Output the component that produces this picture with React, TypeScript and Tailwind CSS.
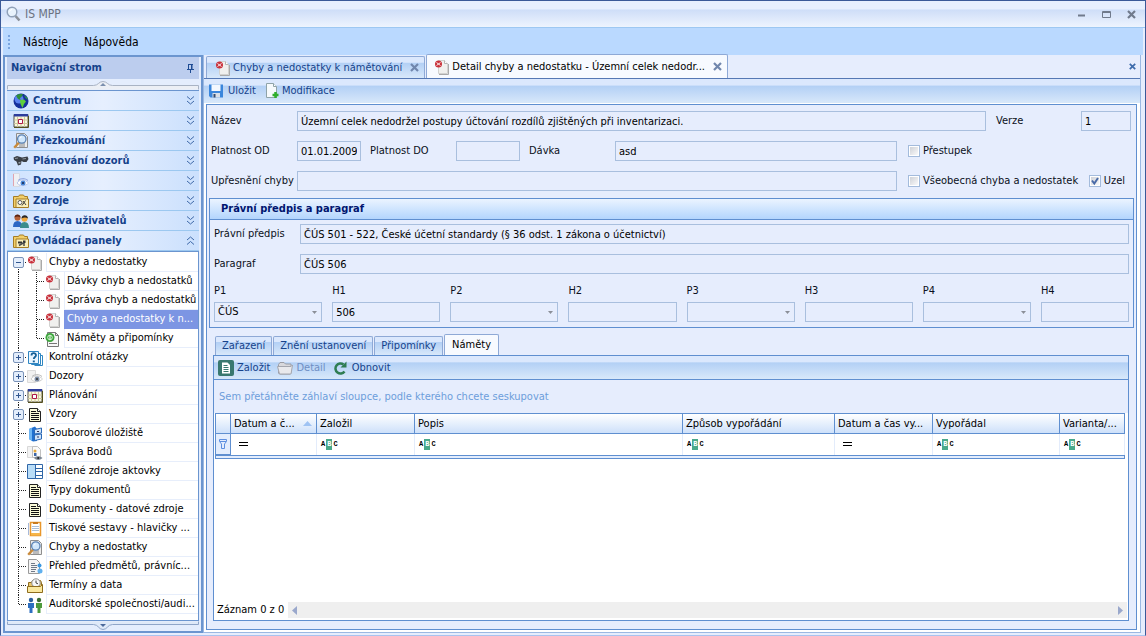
import { useId } from 'react';
import type { ReactNode } from 'react';
import clsx from 'clsx';

type IconName =
  | 'error'
  | 'globe'
  | 'calendar'
  | 'search'
  | 'binoculars'
  | 'eye'
  | 'folder'
  | 'folderTools'
  | 'users'
  | 'note'
  | 'question'
  | 'eyeGray'
  | 'doc'
  | 'storage'
  | 'points'
  | 'grid'
  | 'print'
  | 'overview'
  | 'clock'
  | 'people';

const icons: Record<IconName, ReactNode> = {
  error: (
    <>
      <path d="M4.500 1.500h6l3 3v10h-9z" fill="#f0f0ee" stroke="#d2d2d0" />
      <path d="M5 15.500h9.500V5" stroke="#aaa" />
      <path d="M10.500 1.500v3h3" fill="#fff" stroke="#b5b5b5" />
      <circle cx="4.500" cy="5" r="3.500" fill="#c9323c" />
      <path d="M2.500 3.500 6.500 6.500M6.500 3.500 2.500 6.500" stroke="#fff" strokeWidth=".900" />
    </>
  ),
  globe: (
    <>
      <circle cx="8" cy="8" r="7.500" fill="#16309c" />
      <circle cx="6" cy="6" r="4.500" fill="#5b82f0" />
      <path d="M3 2.500 6 1 10 1 8.500 4 7 5 7.500 7 5 6z" fill="#2f8e3a" />
      <path d="M7 7 11 6.500 13 8.500 11 11 9.500 15 7.500 11z" fill="#5fd03a" />
      <path d="M11 2 14 4.500 15 7 12.500 5z" fill="#2f9e3a" />
    </>
  ),
  calendar: (
    <>
      <path d="M1 1.500h14v12.500H1z" fill="#fbf8da" stroke="#4a4a4a" />
      <path d="M1 1h14v2.500H1z" fill="#2c3c9c" />
      <path d="M4.500 4v10M8 4v10M11.500 4v10M1 7h14M1 10.500h14" stroke="#cdc79c" />
      <path d="M5.500 6.500h4v4h-4z" fill="#fff" stroke="#b01848" />
      <path d="M1 14.500h14.500V3" stroke="#55501e" fill="none" />
    </>
  ),
  search: (
    <>
      <path d="M3.500.500h8l3 3v11h-11z" fill="#ededed" stroke="#8e8e8e" />
      <path d="M6 11h6M6 13h6" stroke="#8a8a8a" />
      <path d="M1.200 14.800 6 9.500" stroke="#c98a3a" strokeWidth="2.400" />
      <circle cx="8.800" cy="6" r="4.200" fill="#cfe6fb" stroke="#5b83b4" strokeWidth="1.300" />
      <path d="M6.800 5.500a2.200 2.200 0 0 1 2-1.700" stroke="#fff" fill="none" />
    </>
  ),
  binoculars: (
    <>
      <path d="M.500 4.500 4 3l5 1.500 5.500-1 1 2.500-2 3h-3L8.500 8 8 11.500 5 12.500 3.500 8.500 1 7z" fill="#3a3f46" />
      <path d="M2 5.500 5 5M9.500 6 13 5.500" stroke="#8f979f" />
      <path d="M5.500 10 7.500 9.500" stroke="#9aa3ad" strokeWidth="1.500" />
    </>
  ),
  eye: (
    <>
      <path d="M.500.500h6v13h-6z" fill="#eef0f4" stroke="#d5dae4" />
      <path d="M.500 1v12" stroke="#e0a4b0" />
      <path d="M4 10c2.500-4 8-4 11.500 0-3 3.500-8.500 3.500-11.500 0z" fill="#fff" stroke="#b8c6ec" />
      <circle cx="10" cy="10" r="2.500" fill="#4a88d8" />
      <circle cx="10" cy="10" r="1" fill="#16264c" />
      <path d="M5 7.500c2.500-2.500 7-2.500 10 0" stroke="#8ea2dc" fill="none" />
    </>
  ),
  folder: (
    <>
      <path d="M.500 3.500h5l1-1.500h4l1 1.500h3v11H.500z" fill="#f2cf6a" stroke="#a57c26" />
      <path d="M3 6h12.500v8.500H3z" fill="#faeeb8" stroke="#a57c26" />
      <circle cx="7" cy="9.500" r="2" fill="#fff" stroke="#555" />
      <path d="M9 12.500 12.500 7.500M10 8l3 4" stroke="#3f3f3f" />
    </>
  ),
  folderTools: (
    <>
      <path d="M.500 3.500h5l1-1.500h4l1 1.500h3v11H.500z" fill="#f2cf6a" stroke="#a57c26" />
      <path d="M3 6h12.500v8.500H3z" fill="#faeeb8" stroke="#a57c26" />
      <path d="M5 8.500h4v2H5zM10 7.500h2.500v2.500H10z" fill="#333" />
      <path d="M6 12.500 11 9.500M11 13v-3" stroke="#4c4c4c" strokeWidth="1.500" />
    </>
  ),
  users: (
    <>
      <path d="M0 14c0-4 1.500-6 4.500-6S9 10 9 14z" fill="#2c66c4" />
      <circle cx="4.500" cy="4.800" r="3" fill="#b5623a" />
      <path d="M1.500 4.500C1.500.500 7.500.500 7.500 4.500 6 3.500 3.500 3 1.500 4.500z" fill="#5a2414" />
      <path d="M7 15c0-4 1.500-6 4.500-6s4.500 2 4.500 6z" fill="#3a8c8c" />
      <circle cx="11.500" cy="5.800" r="3" fill="#f0a83c" />
      <path d="M8.500 5.500c0-4.500 6.500-4.500 6.500 0-2-1.500-4-1.500-6.500 0z" fill="#26262a" />
    </>
  ),
  note: (
    <>
      <path d="M2.500 1.500h8l3 3v11h-11z" fill="#f7f7f7" stroke="#777" />
      <path d="M10.500 1.500v3h3M4 12.500h8" fill="none" stroke="#777" />
      <circle cx="5" cy="6.500" r="4.500" fill="#3ba53c" />
      <circle cx="5" cy="6.500" r="2.300" fill="none" stroke="#d8f3d0" />
      <path d="M5 4.500v4" stroke="#fff" />
    </>
  ),
  question: (
    <>
      <path d="M1.500 1.500h10v12h-10z" fill="#eaf6ff" stroke="#2f86c2" />
      <path d="M11.500 3.500h2v11h-9v-1M13.500 5.500h2v10h-8" fill="none" stroke="#2f86c2" />
      <path d="M4.500 5.500c0-3 4.500-3 4.500-.300C9 7 6.800 7 6.800 9" fill="none" stroke="#176096" strokeWidth="1.800" />
      <path d="M5.800 10.500h2v1.800h-2z" fill="#176096" />
    </>
  ),
  eyeGray: (
    <>
      <path d="M.500 1.500h8v12h-8z" fill="#f1f1f1" stroke="#dadada" />
      <path d="M4 10c2.500-4 8-4 11.500 0-3 3.500-8.500 3.500-11.500 0z" fill="#fff" stroke="#cdcdcd" />
      <circle cx="10" cy="10" r="2.500" fill="#7f8fa8" />
      <circle cx="10" cy="10" r="1" fill="#333" />
      <path d="M5 7.500c2.500-2.500 7-2.500 10 0" stroke="#b8b8b8" fill="none" />
    </>
  ),
  doc: (
    <>
      <path d="M2.500 1.500h8l3 3v10h-11z" fill="#fbfbd8" stroke="#222" />
      <path d="M10.500 1.500v3h3" fill="#fff" stroke="#222" />
      <path d="M4 4.500h5M4 6.500h8M4 8.500h8M4 10.500h8M4 12.500h8" stroke="#111" />
    </>
  ),
  storage: (
    <>
      <path d="M2 3 8 .500 10 3v12l-4 .500L2 13z" fill="#1f6fd0" />
      <path d="M2 3 5 1.800V15L2 13z" fill="#6db5f4" />
      <path d="M7.500 3.500 14.500 2v5l-7 1z" fill="#cfe3fa" stroke="#2a69b8" />
      <path d="M7.500 9 14.500 8v5l-7 1.500z" fill="#cfe3fa" stroke="#2a69b8" />
      <path d="M10 5.500h2M10 11h2" stroke="#335" />
    </>
  ),
  points: (
    <>
      <path d="M.500 1.500h7v11h-7z" fill="#f3f3f3" stroke="#d8d8d8" />
      <path d="M5.500 1.500h5l3 3v8h-8z" fill="#fafafa" stroke="#c0c0c0" />
      <circle cx="8" cy="6" r="1.500" fill="#e5a93c" />
      <path d="M7 8h2.500v3H7z" fill="#3b66a8" />
      <path d="M7 13c2-2.500 6-2.500 8.500 0-2.500 2.500-6.500 2.500-8.500 0z" fill="#7b8694" />
      <circle cx="11.200" cy="13" r="1" fill="#222" />
    </>
  ),
  grid: (
    <>
      <path d="M.500.500h15v14H.500z" fill="#fff" stroke="#2f66a8" />
      <path d="M1 1h7v13H1z" fill="#b9ddf8" />
      <path d="M8.500.500v14M9 4.500h7M9 7.500h7M9 11.500h7" stroke="#2f66a8" />
    </>
  ),
  print: (
    <>
      <path d="M3.500 1.500h10v13h-10z" fill="#fff" stroke="#e8962c" strokeWidth="1.500" />
      <path d="M6 1h5v2H6z" fill="#c97a1c" />
      <path d="M5 5.500h7M5 7.500h7M5 9.500h7" stroke="#a9bfd8" />
      <path d="M4 12h9v2.500H4z" fill="#f6b64a" />
      <path d="M1.500 2v12" stroke="#a5b9dc" />
    </>
  ),
  overview: (
    <>
      <path d="M1.500.500h8l3 3v11h-11z" fill="#f5f5f5" stroke="#9a9a9a" />
      <path d="M4 4.500h4M4 6.500h6M4 8.500h6M4 10.500h5M4 12.500h4" stroke="#707a88" />
      <circle cx="12.500" cy="6.500" r="2" fill="#3c97e0" />
      <circle cx="13" cy="12" r="2.500" fill="#5fb0ef" />
    </>
  ),
  clock: (
    <>
      <path d="M1.500 4.500h3l1-2h8l1 2v10h-13z" fill="#e9c46a" stroke="#8f6d1e" />
      <circle cx="9" cy="5" r="4.200" fill="#f7f7f7" stroke="#8d8d8d" />
      <path d="M9 2.500V5l2 .800" stroke="#444" fill="none" />
      <path d="M.500 8.500h13l2-2v8H.500z" fill="#fae8a0" stroke="#8f6d1e" />
    </>
  ),
  people: (
    <>
      <circle cx="4" cy="3" r="2.200" fill="#2d5f9e" />
      <path d="M1 6h6v5H5.500v5h-3v-5H1z" fill="#2d6fc0" />
      <circle cx="12" cy="3" r="2.200" fill="#3b6b35" />
      <path d="M9 6h6v5h-1.500v5h-3v-5H9z" fill="#4c9a3d" />
    </>
  ),
};

const Icon = ({ name }: { name: IconName }) => (
  <svg viewBox="0 0 16 16" className="size-4 shrink-0" fill="none" aria-hidden="true">
    {icons[name]}
  </svg>
);

const Cross = ({ className }: { className: string }) => (
  <svg viewBox="0 0 9 9" className={className} aria-hidden="true">
    <path d="M1 1 8 8M8 1 1 8" stroke="currentColor" strokeWidth="2.200" />
  </svg>
);

const groups: { label: string; icon: IconName; open?: boolean }[] = [
  { label: 'Centrum', icon: 'globe' },
  { label: 'Plánování', icon: 'calendar' },
  { label: 'Přezkoumání', icon: 'search' },
  { label: 'Plánování dozorů', icon: 'binoculars' },
  { label: 'Dozory', icon: 'eye' },
  { label: 'Zdroje', icon: 'folder' },
  { label: 'Správa uživatelů', icon: 'users' },
  { label: 'Ovládací panely', icon: 'folderTools', open: true },
];

type Node = {
  label: string;
  icon: IconName;
  child?: boolean;
  toggle?: 'plus' | 'minus';
  selected?: boolean;
  last?: boolean;
};

const nodes: Node[] = [
  { label: 'Chyby a nedostatky', icon: 'error', toggle: 'minus' },
  { label: 'Dávky chyb a nedostatků', icon: 'error', child: true },
  { label: 'Správa chyb a nedostatků', icon: 'error', child: true },
  { label: 'Chyby a nedostatky k n...', icon: 'error', child: true, selected: true },
  { label: 'Náměty a připomínky', icon: 'note', child: true, last: true },
  { label: 'Kontrolní otázky', icon: 'question', toggle: 'plus' },
  { label: 'Dozory', icon: 'eyeGray', toggle: 'plus' },
  { label: 'Plánování', icon: 'calendar', toggle: 'plus' },
  { label: 'Vzory', icon: 'doc', toggle: 'plus' },
  { label: 'Souborové úložiště', icon: 'storage' },
  { label: 'Správa Bodů', icon: 'points' },
  { label: 'Sdílené zdroje aktovky', icon: 'grid' },
  { label: 'Typy dokumentů', icon: 'doc' },
  { label: 'Dokumenty - datové zdroje', icon: 'doc' },
  { label: 'Tiskové sestavy - hlavičky ...', icon: 'print' },
  { label: 'Chyby a nedostatky', icon: 'search' },
  { label: 'Přehled předmětů, právníc...', icon: 'overview' },
  { label: 'Termíny a data', icon: 'clock' },
  { label: 'Auditorské společnosti/audi...', icon: 'people', last: true },
];

// connector lines and the expand box, one piece for each row
const Branch = ({ node, first }: { node: Node; first: boolean }) => (
  <svg
    viewBox={node.child ? '0 0 37 19' : '0 0 19 19'}
    className={clsx('h-[19px] shrink-0', node.child ? 'w-[37px]' : 'w-[19px]')}
    fill="none"
    stroke="#222"
    strokeDasharray="1 1"
    aria-hidden="true"
  >
    <path d={node.child ? 'M10.500 0v19' : first ? 'M10.500 10v9' : node.last ? 'M10.500 0v10' : 'M10.500 0v19'} />
    {node.child ? <path d={node.last ? 'M28.500 0v10M29 9.500h8' : 'M28.500 0v19M29 9.500h8'} /> : <path d="M11 9.500h8" />}
    {node.toggle && (
      <g strokeDasharray="none">
        <rect x="5.500" y="4.500" width="10" height="10" rx="1.500" fill="#e3edfb" stroke="#7992b8" />
        <path d={node.toggle === 'plus' ? 'M8 9.500h5M10.500 7v5' : 'M8 9.500h5'} stroke="#31568f" />
      </g>
    )}
  </svg>
);

const Sidebar = () => (
  <aside className="flex w-[200px] shrink-0 flex-col border-2 border-[#6b95cf] bg-[#e4edfd] px-0.5">
    <div className="flex h-[22px] items-center justify-between bg-[#bccdee] px-1 font-bold text-[#15428b]">
      <h2>Navigační strom</h2>
      <button type="button" aria-label="Připnout">
        <svg viewBox="0 0 9 9" className="size-[9px]" fill="none" stroke="#1f4c94" aria-hidden="true">
          <path d="M2.500 0v5M2 .500h5M6 0v5M5.500 0v5M1 5.500h7M4.500 6v3" />
        </svg>
      </button>
    </div>
    <button type="button" aria-label="Posunout nahoru" className="flex h-3 items-end border-b border-[#6b95cf]">
      <svg viewBox="0 0 192 10" preserveAspectRatio="none" className="h-[10px] w-full" aria-hidden="true">
        <path d="M.500 9.500v-4h86c5 0 5-4 9.500-4s4.500 4 9.500 4h86v4" fill="#eceff5" stroke="#a9b3c4" />
        <path d="M93 6h6l-3-3z" fill="#7b8fae" />
      </svg>
    </button>
    {groups.map((group) => (
      <button
        key={group.label}
        type="button"
        className="flex h-5 shrink-0 items-center gap-1 border-b border-[#9cc8f0] bg-linear-to-r from-[#cfe3ff] via-[#e6effe] to-[#cbe0fd] pr-1 pl-1.5 text-left font-bold text-[#15428b]"
      >
        <Icon name={group.icon} />
        <span className="flex-1">{group.label}</span>
        <svg
          viewBox="0 0 9 9"
          className={clsx('size-[9px]', group.open && 'rotate-180')}
          fill="none"
          stroke="#3e68a8"
          aria-hidden="true"
        >
          <path d="M1 .500 4.500 3.500 8 .500M1 5 4.500 8 8 5" />
        </svg>
      </button>
    ))}
    <ul className="min-h-0 flex-1 border border-[#6b95cf] bg-white pt-px">
      {nodes.map((node, i) => (
        <li key={node.label + i} className="flex h-[19px]">
          <Branch node={node} first={i === 0} />
          <span className="flex items-center">
            <Icon name={node.icon} />
          </span>
          <a
            href="#"
            className={clsx(
              'ml-[3px] min-w-0 flex-1 overflow-hidden border-b border-l pl-0.5 leading-[18px] whitespace-nowrap',
              node.selected ? 'border-[#7c95e3] bg-[#7c95e3] text-white' : 'border-[#e7eefb] text-black',
            )}
          >
            {node.label}
          </a>
        </li>
      ))}
    </ul>
    <button type="button" aria-label="Posunout dolů" className="flex h-[10px]">
      <svg viewBox="0 0 192 10" preserveAspectRatio="none" className="h-[10px] w-full" aria-hidden="true">
        <path d="M.500.500v3h86c5 0 5 5 9.500 5s4.500-5 9.500-5h86v-3" fill="#dfe9f8" stroke="#8fa5c8" />
        <path d="M93 3h6l-3 3z" fill="#4c6a9c" />
      </svg>
    </button>
  </aside>
);

type FieldProps = { label: string; value?: string; labelClass: string; className?: string };

const inputClass = 'h-5 border border-[#a9bfde] bg-[#e6edfd] px-[3px] text-black outline-none';

const Field = ({ label, value = '', labelClass, className }: FieldProps) => {
  const id = useId();
  return (
    <>
      <label htmlFor={id} className={clsx('shrink-0', labelClass)}>
        {label}
      </label>
      <input id={id} type="text" readOnly value={value} className={clsx(inputClass, className)} />
    </>
  );
};

const Check = ({ label, checked = false }: { label: string; checked?: boolean }) => (
  <label className="flex items-center gap-[3px] whitespace-nowrap">
    <span className="relative flex">
      <input
        type="checkbox"
        defaultChecked={checked}
        className="peer size-3 appearance-none border border-[#a3bbdc] bg-linear-to-br from-[#c9ccd3] to-white outline-1 -outline-offset-2 outline-white"
      />
      <svg
        viewBox="0 0 12 12"
        className="pointer-events-none absolute inset-0 hidden size-3 peer-checked:block"
        fill="none"
        aria-hidden="true"
      >
        <path d="M3 5.500 5.300 8.500 9 3" stroke="#4a6ba8" strokeWidth="2" />
      </svg>
    </span>
    {label}
  </label>
);

const refs = [
  { label: 'P1', value: 'ČÚS', list: true },
  { label: 'H1', value: '506' },
  { label: 'P2', list: true },
  { label: 'H2' },
  { label: 'P3', list: true },
  { label: 'H3' },
  { label: 'P4', list: true },
  { label: 'H4' },
];

const Reference = ({ label, value = '', list }: { label: string; value?: string; list?: boolean }) => {
  const id = useId();
  return (
    <div className="flex min-w-0 flex-col gap-1">
      <label htmlFor={id} className="leading-[14px]">
        {label}
      </label>
      {list ? (
        <span className="relative flex">
          <select id={id} defaultValue={value} className={clsx(inputClass, 'w-full appearance-none')}>
            <option>{value}</option>
          </select>
          <svg viewBox="0 0 5 3" className="pointer-events-none absolute top-[9px] right-[5px] h-[3px] w-[5px]" aria-hidden="true">
            <path d="M0 0h5L2.500 3z" fill="#8b8f98" />
          </svg>
        </span>
      ) : (
        <input id={id} type="text" readOnly value={value} className={clsx(inputClass, 'w-full')} />
      )}
    </div>
  );
};

const columns = [
  { label: 'Datum a č...', width: 'w-[86px]', date: true, sorted: true },
  { label: 'Založil', width: 'w-[98px]' },
  { label: 'Popis', width: 'w-auto' },
  { label: 'Způsob vypořádání', width: 'w-[152px]' },
  { label: 'Datum a čas vy...', width: 'w-[98px]', date: true },
  { label: 'Vypořádal', width: 'w-[127px]' },
  { label: 'Varianta/...', width: 'w-[65px]' },
];

const Equals = () => (
  <svg viewBox="0 0 9 5" className="ml-1 h-[5px] w-[9px]" aria-hidden="true">
    <path d="M0 .500h9M0 3.500h9" stroke="#000" />
  </svg>
);

const Abc = () => (
  <span className="flex h-[11px] items-center gap-px font-mono text-[7px] leading-[11px] font-bold text-black">
    A<span className="bg-[#4aa98a] px-px text-white">B</span>C
  </span>
);

const Grid = () => (
  <table className="w-full table-fixed border-collapse text-black">
    <thead>
      <tr className="h-5 bg-linear-to-b from-white to-[#cbdffa]">
        <th className="w-[15px] border border-[#5f8fd0]" />
        {columns.map((col) => (
          <th
            key={col.label}
            className={clsx('border border-[#5f8fd0] pr-1 pl-[3px] text-left font-normal whitespace-nowrap', col.width)}
          >
            <span className="flex items-center justify-between leading-4">
              {col.label}
              {col.sorted && (
                <svg viewBox="0 0 9 5" className="h-[5px] w-[9px] shrink-0" aria-hidden="true">
                  <path d="M0 5h9L4.500 0z" fill="#9fc3f3" />
                </svg>
              )}
            </span>
          </th>
        ))}
      </tr>
    </thead>
    <tbody>
      <tr className="h-[21px]">
        <td className="border border-[#5f8fd0] bg-[#e3edfd]">
          <svg viewBox="0 0 8 10" className="mx-auto h-[10px] w-2" fill="none" stroke="#5d8fe0" aria-hidden="true">
            <path d="M.500.500h7v2l-2 2.500v4.500h-3V5l-2-2.500zM1 2.500h6" />
          </svg>
        </td>
        {columns.map((col) => (
          <td key={col.label} className="border-r border-[#e3ecfb] pl-1">
            {col.date ? <Equals /> : <Abc />}
          </td>
        ))}
      </tr>
    </tbody>
  </table>
);

const bar = 'bg-linear-to-b from-[#dbe8fd] from-25% via-[#b3d0f5] via-30% to-[#d8e8fa]';

const DetailTabs = () => (
  <div role="tablist" className="flex items-end gap-px pl-0.5">
    {['Zařazení', 'Znění ustanovení', 'Připomínky'].map((label) => (
      <button
        key={label}
        type="button"
        role="tab"
        className={clsx('h-[19px] rounded-t-xs border border-b-0 border-[#8ea9d6] px-1.5 text-[#15428b]', bar)}
      >
        {label}
      </button>
    ))}
    <button
      type="button"
      role="tab"
      aria-selected="true"
      className="h-[21px] rounded-t-xs border border-b-0 border-[#8ea9d6] bg-[#f7faff] px-[7px] text-black"
    >
      Náměty
    </button>
  </div>
);

const Detail = () => (
  <section className="flex min-h-0 flex-1 flex-col">
    <DetailTabs />
    <div className="flex min-h-0 flex-1 flex-col border border-[#5f8fd0] bg-white">
      <div className={clsx('flex h-6 shrink-0 items-center border-b border-[#5f8fd0] px-1 text-[#15428b]', bar)}>
        <button type="button" className="flex items-center gap-[3px]">
          <svg viewBox="0 0 16 16" className="size-4" aria-hidden="true">
            <rect width="16" height="16" rx="2" fill="#39786f" />
            <path d="M4 2.500h5.500L12 5v8.500H4z" fill="#fff" />
            <path d="M5.500 5.500h4M5.500 7.500h5M5.500 9.500h5M5.500 11.500h5" stroke="#39786f" />
          </svg>
          Založit
        </button>
        <button type="button" disabled className="ml-[7px] flex items-center gap-[3px] text-[#6f8fc4]">
          <svg viewBox="0 0 16 16" className="size-4" aria-hidden="true">
            <path d="M1.500 4.500 3 2.500h4l1.500 1.500H14v9l-1 1H2.500l-1-1z" fill="#d8d8dc" stroke="#9a9ca4" />
            <path d="M.500 6.500h13.500l1.500-1.500-1.500 9H2.500z" fill="#e9e9ec" stroke="#a4a6ae" />
          </svg>
          Detail
        </button>
        <button type="button" className="ml-[7px] flex items-center gap-[5px]">
          <svg viewBox="0 0 14 14" className="size-[14px]" fill="none" aria-hidden="true">
            <path d="M11.500 10.500A5 5 0 1 1 10.500 3.500" stroke="#2f7d52" strokeWidth="2.500" />
            <path d="M7.500 6.500h6v-6z" fill="#2f7d52" />
          </svg>
          Obnovit
        </button>
      </div>
      <div className="flex min-h-0 flex-1 flex-col px-px">
        <p className="-mx-px flex h-[33px] shrink-0 items-center bg-[#e6edfd] px-[5px] text-[#6d9ddb]">
          Sem přetáhněte záhlaví sloupce, podle kterého chcete seskupovat
        </p>
        <div className="pr-0.5">
          <Grid />
          <div className="h-1 border border-[#5f8fd0] bg-[#e3edfd]" />
        </div>
        <div className="flex-1" />
        <div className="flex h-[18px] shrink-0 items-center gap-1 pb-0.5 pl-0.5">
          <span className="whitespace-nowrap text-black">Záznam 0 z 0</span>
          <div className="flex h-4 flex-1 items-center justify-between bg-[#efefef] px-1">
            <svg viewBox="0 0 5 9" className="h-[9px] w-[5px]" aria-hidden="true">
              <path d="M5 0v9L0 4.500z" fill="#9aa8cc" />
            </svg>
            <svg viewBox="0 0 5 9" className="h-[9px] w-[5px]" aria-hidden="true">
              <path d="M0 0v9l5-4.500z" fill="#9aa8cc" />
            </svg>
          </div>
        </div>
      </div>
    </div>
  </section>
);

const Form = () => (
  <form className="mr-[3px] mb-0.5 ml-0.5 flex min-h-0 flex-1 flex-col border border-[#5f8fd0] bg-[#e6edfd] p-0.5 pb-2">
    <div className="flex flex-col gap-2.5 pt-1 pr-[3px] pl-0.5">
      <div className="flex items-center">
        <Field label="Název" labelClass="w-[86px]" className="min-w-0 flex-1" value="Územní celek nedodržel postupy účtování rozdílů zjištěných při inventarizaci." />
        <Field label="Verze" labelClass="ml-2.5 w-[85px]" className="w-[50px]" value="1" />
      </div>
      <div className="flex items-center">
        <Field label="Platnost OD" labelClass="w-[86px]" className="w-16" value="01.01.2009" />
        <Field label="Platnost DO" labelClass="ml-[9px] w-[86px]" className="w-16" />
        <Field label="Dávka" labelClass="ml-[9px] w-[86px]" className="min-w-0 flex-1" value="asd" />
        <div className="ml-[11px] w-[223px] shrink-0">
          <Check label="Přestupek" />
        </div>
      </div>
      <div className="flex items-center">
        <Field label="Upřesnění chyby" labelClass="w-[86px]" className="min-w-0 flex-1" />
        <div className="ml-[11px] flex w-[223px] shrink-0 justify-between pr-1.5">
          <Check label="Všeobecná chyba a nedostatek" />
          <Check label="Uzel" checked />
        </div>
      </div>
    </div>
    <fieldset className="mt-[7px] border border-[#5f8fd0]">
      <h3 className="flex h-[21px] items-center border-b border-[#5f8fd0] bg-linear-to-b from-[#ebf4ff] to-[#b3d5fd] pl-[11px] font-bold text-[#00156e]">
        Právní předpis a paragraf
      </h3>
      <div className="flex flex-col gap-2.5 px-1 pt-1 pb-[5px]">
        <div className="flex items-center">
          <Field label="Právní předpis" labelClass="w-[86px]" className="min-w-0 flex-1" value="ČÚS 501 - 522, České účetní standardy (§ 36 odst. 1 zákona o účetnictví)" />
        </div>
        <div className="flex items-center">
          <Field label="Paragraf" labelClass="w-[86px]" className="min-w-0 flex-1" value="ČÚS 506" />
        </div>
        <div className="grid grid-cols-[repeat(7,108fr)_88fr] gap-2.5">
          {refs.map((ref) => (
            <Reference key={ref.label} label={ref.label} value={ref.value} list={ref.list} />
          ))}
        </div>
      </div>
    </fieldset>
    <div className="mt-1.5 mr-[5px] ml-1 flex min-h-0 flex-1 flex-col">
      <Detail />
    </div>
  </form>
);

const DocumentTabs = () => (
  <div className="flex h-6 items-end border-b border-[#5578b4] pl-0.5">
    <div className={clsx('flex h-[22px] items-center rounded-t-xs border border-b-0 border-[#8ea9d6] pr-[5px] pl-2', bar)}>
      <button type="button" className="flex items-center gap-0.5 text-[#15428b]">
        <Icon name="error" />
        Chyby a nedostatky k námětování
      </button>
      <button type="button" aria-label="Zavřít záložku" className="ml-2 text-[#7187ad]">
        <Cross className="size-[9px]" />
      </button>
    </div>
    <div className="ml-px flex h-6 items-center rounded-t-xs border border-b-0 border-[#8ea9d6] bg-[#f7faff] pr-[5px] pl-[7px]">
      <button type="button" className="flex items-center gap-0.5 text-black">
        <Icon name="error" />
        Detail chyby a nedostatku - Územní celek nedodr...
      </button>
      <button type="button" aria-label="Zavřít záložku" className="ml-2 text-[#7187ad]">
        <Cross className="size-[9px]" />
      </button>
    </div>
    <button type="button" aria-label="Zavřít" className="mr-1 ml-auto self-center text-[#3d6bab]">
      <Cross className="size-[7px]" />
    </button>
  </div>
);

const App = () => (
  <div className="flex min-h-screen flex-col border border-[#3b5998] border-b-[#a9c3ef] bg-[#e6edfd] font-['DejaVu_Sans_Condensed','Noto_Sans',sans-serif] text-[11px] leading-4 text-[#0b1020]">
    <header className="flex h-[27px] shrink-0 items-center border-b border-[#9ec8f2] bg-linear-to-b from-[#e8effe] from-30% via-[#cfdef8] via-35% to-[#eef4fe] pr-[9px] pl-[5px]">
      <svg viewBox="0 0 16 16" className="size-4" fill="none" aria-hidden="true">
        <path d="M9.500 10 13.500 14.500" stroke="#8a9099" strokeWidth="2.600" />
        <circle cx="6" cy="6" r="4.800" fill="#e8f2fc" stroke="#8fa0b8" strokeWidth="1.400" />
        <path d="M3.500 5.500a3 3 0 0 1 2.500-2" stroke="#fff" />
      </svg>
      <h1 className="ml-[3px] flex-1 text-[12px] text-[#6b7280]">IS MPP</h1>
      <div className="flex items-center gap-4 text-[#707a8c]">
        <button type="button" aria-label="Minimalizovat">
          <svg viewBox="0 0 8 9" className="h-[9px] w-2" aria-hidden="true">
            <path d="M0 5.500h7" stroke="currentColor" strokeWidth="2" />
          </svg>
        </button>
        <button type="button" aria-label="Maximalizovat">
          <svg viewBox="0 0 9 7" className="h-[7px] w-[9px]" fill="none" aria-hidden="true">
            <path d="M.500.500h8v6h-8zM0 1.500h9" stroke="currentColor" />
          </svg>
        </button>
        <button type="button" aria-label="Zavřít okno">
          <Cross className="size-[9px]" />
        </button>
      </div>
    </header>
    <nav className="mx-0.5 flex h-[27px] shrink-0 items-center gap-4 bg-[#bad9ff] pl-[5px] text-[12px] text-black">
      <svg viewBox="0 0 3 14" className="-mr-1 h-[14px] w-[3px]" aria-hidden="true">
        <path d="M1 0v14" stroke="#7aa5e0" strokeWidth="2" strokeDasharray="2 2" />
      </svg>
      <button type="button">Nástroje</button>
      <button type="button">Nápověda</button>
    </nav>
    <div className="flex min-h-0 flex-1 pb-0.5 pl-0.5">
      <Sidebar />
      <main className="mr-1 flex min-w-0 flex-1 flex-col border-r border-b border-l border-[#9bb8e2] bg-white">
        <div className="bg-[#e6edfd]">
          <DocumentTabs />
        </div>
        <div className={clsx('mb-px flex h-6 shrink-0 items-center gap-2 px-1 text-[#15428b]', bar)}>
          <button type="button" className="flex items-center gap-1">
            <svg viewBox="0 0 16 16" className="size-4" aria-hidden="true">
              <path d="M1 1.500h14v13H2.500L1 13z" fill="#3a86dc" />
              <path d="M3.500 1.500h9V8h-9z" fill="#f4f8fe" />
              <path d="M4.500 10h7.500v4.500H4.500z" fill="#d8dfe8" />
              <path d="M5.500 11h2v3.500h-2z" fill="#334a70" />
            </svg>
            Uložit
          </button>
          <button type="button" className="flex items-center gap-0.5">
            <svg viewBox="0 0 16 16" className="size-4" aria-hidden="true">
              <path d="M2.500.500h7l3 3v11h-10z" fill="#f6fafc" stroke="#8fa3a8" />
              <path d="M9.500.500v3h3" fill="#fff" stroke="#8fa3a8" />
              <path d="M11.500 9v6M8.500 12h6" stroke="#2fae2c" strokeWidth="2.500" />
            </svg>
            Modifikace
          </button>
        </div>
        <Form />
      </main>
    </div>
  </div>
);

export default App;
